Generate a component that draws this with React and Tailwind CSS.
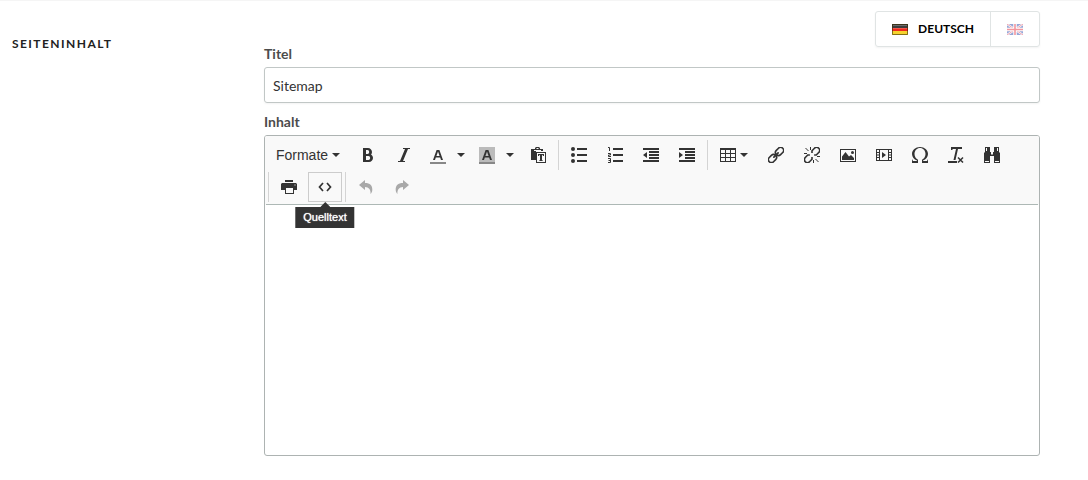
import React, { useState } from 'react';
import clsx from 'clsx';
import { ImOmega } from 'react-icons/im';

const Icon = ({ children }) => (
  <svg viewBox="0 0 16 16" className="w-4 h-4 shrink-0" fill="currentColor" aria-hidden="true">
    {children}
  </svg>
);

const Caret = () => (
  <svg viewBox="0 0 8 4" className="w-2 h-1 shrink-0" fill="currentColor" aria-hidden="true">
    <path d="M0 0h8L4 4z" />
  </svg>
);

const icons = {
  bold: (
    <path
      transform="scale(.015625)"
      d="M707.88 484.652c37.498-44.542 60.12-102.008 60.12-164.652 0-141.16-114.842-256-256-256h-320v896h384c141.158 0 256-114.842 256-256 0-92.956-49.798-174.496-124.12-219.348zM384 192h101.5c55.968 0 101.5 57.42 101.5 128s-45.532 128-101.5 128h-101.5v-256zM543 832h-159v-256h159c58.45 0 106 57.42 106 128s-47.55 128-106 128z"
    />
  ),
  italic: <path d="M14 1v1h-2L7 14h2v1H2v-1h2L9 2H7V1z" />,
  forecolor: (
    <>
      <path d="M3 13 6.600 3h2.800L13 13h-2l-.8-2.500H5.800L5 13zM6.400 9h3.200L8 4.500z" />
      <path d="M0 15h16v2H0z" fill="#888" />
    </>
  ),
  backcolor: (
    <>
      <path d="M0 0h16v15H0z" fill="#bbb" />
      <path d="M3 13 6.600 3h2.800L13 13h-2l-.8-2.500H5.800L5 13zM6.400 9h3.200L8 4.500z" />
      <path d="M0 15h16v2H0z" fill="#888" />
    </>
  ),
  paste: (
    <g transform="translate(1 0)">
      <path d="M0 2h4V1l1-1h3l1 1v1h3v2H5v9H0zM3 3v1h7V3zM5.500 1v1h2V1z" fillRule="evenodd" />
      <path d="M5 5h10v11H5zM6 6v9h8V6z" fillRule="evenodd" />
      <path d="M7 7h6v2h-1l-.4-1h-.6v5l.8.4V14H8.200v-.6L9 13V8h-.6L8 9H7z" />
    </g>
  ),
  bullist: (
    <>
      <circle cx="2" cy="2" r="2" />
      <circle cx="2" cy="8" r="2" />
      <circle cx="2" cy="14" r="2" />
      <path d="M6 1h10v2H6zM6 7h10v2H6zM6 13h10v2H6z" />
    </>
  ),
  numlist: (
    <>
      <path d="M6 1h10v2H6zM6 7h10v2H6zM6 13h10v2H6z" />
      <path
        d="M1 .5h1.500V4M1 6.500h2.500v1.500h-2v1.500H4M1 11.500h2.500v4H1M1.500 13.500h2"
        fill="none"
        stroke="currentColor"
      />
    </>
  ),
  outdent: <path d="M0 1h16v2H0zM6 4h10v2H6zM6 7h10v2H6zM6 10h10v2H6zM0 13h16v2H0zM4 5v6L0 8z" />,
  indent: <path d="M0 1h16v2H0zM6 4h10v2H6zM6 7h10v2H6zM6 10h10v2H6zM0 13h16v2H0zM0 5v6l4-3z" />,
  table: (
    <path
      fillRule="evenodd"
      d="M0 1h16v14H0zM1 3v3h4V3zM6 3v3h4V3zM11 3v3h4V3zM1 7v3h4V7zM6 7v3h4V7zM11 7v3h4V7zM1 11v3h4v-3zM6 11v3h4v-3zM11 11v3h4v-3z"
    />
  ),
  link: (
    <g fill="none" stroke="currentColor" strokeWidth="1.600" transform="rotate(-45 8 8)">
      <rect x="-1.500" y="5" width="9" height="6" rx="3" />
      <rect x="8.500" y="5" width="9" height="6" rx="3" />
      <path d="M5 8h6" strokeWidth="1.800" strokeLinecap="round" />
    </g>
  ),
  unlink: (
    <g fill="none" stroke="currentColor">
      <g strokeWidth="1.600" transform="rotate(-45 8 8)">
        <path d="M6.500 6.500 5 5H1.500a3 3 0 0 0 0 6H5l1.500-1.500" />
        <path d="M9.500 6.500 11 5h3.500a3 3 0 0 1 0 6H11L9.500 9.500" />
      </g>
      <path d="M6.500 0v3M1.500 1l3 3M0 6.500h3M9.500 16v-3M14.500 15l-3-3M16 9.500h-3" />
    </g>
  ),
  image: (
    <>
      <path d="M0 2h16v13H0zM1 3v11h14V3z" fillRule="evenodd" />
      <circle cx="12.500" cy="5.500" r="1.500" />
      <path d="M2 13V9.500L5.500 5 9 9.500l2-1.500 3 3v2z" />
    </>
  ),
  media: (
    <path
      fillRule="evenodd"
      d="M0 2h16v12H0zM1 3v2h2V3zM1 6v1.500h2V6zM1 8.500V10h2V8.500zM1 11v2h2v-2zM13 3v2h2V3zM13 6v1.500h2V6zM13 8.500V10h2V8.500zM13 11v2h2v-2zM4 3v10h8V3zM6 5v6l4-3z"
    />
  ),
  removeformat: (
    <>
      <path d="M3 0h11v2h-4L7.500 13h-2L8 2H5L4 3H3zM0 14h9v2H0z" />
      <path d="m10 10.500 5 5M15 10.500l-5 5" fill="none" stroke="currentColor" strokeWidth="1.500" />
    </>
  ),
  search: (
    <path
      fillRule="evenodd"
      d="M1 0h5v5h1v2h2V5h1V0h5v5l1 1v10h-6V9H6v7H0V6l1-1zM2 1v3h1V1zM13 1v3h1V1zM1 14v1h4v-1zM11 14v1h4v-1zM7 7.500V8h2v-.5z"
    />
  ),
  print: (
    <path fillRule="evenodd" d="M4 1h8v2H4zM1 4h14l1 1v6h-3v4H4v-4H0V5zM5 9v5h7V9zM13.500 5.500v1h1v-1z" />
  ),
  code: <path d="M6 4 2.500 8 6 12M10 4l3.500 4-3.500 4" fill="none" stroke="currentColor" strokeWidth="1.700" />,
  undo: <path d="M7 1v3c5 0 7.500 2.500 7.300 7-.1 1.600-.8 3-1.800 4C13 11 11 8 7 8v3L1 6z" />,
  redo: <path d="M9 1v3c-5 0-7.500 2.500-7.300 7 .1 1.600.8 3 1.800 4C3 11 5 8 9 8v3l6-5z" />,
};

const Group = ({ first, children }) => (
  <div className={clsx('flex gap-[2px]', first ? 'ml-[2px]' : 'ml-[3px] pl-[3px] border-l border-[#d4d4d4]')}>
    {children}
  </div>
);

const ToolButton = ({ icon, label, disabled, active, tooltip }) => (
  <div className="relative">
    <button
      type="button"
      aria-label={label}
      disabled={disabled}
      className={clsx(
        'w-[34px] h-[30px] flex items-center justify-center border hover:border-[#ccc]',
        active ? 'border-[#ccc]' : 'border-transparent',
        disabled && 'opacity-40'
      )}
    >
      <Icon>{icons[icon]}</Icon>
    </button>
    {tooltip && (
      <div
        role="tooltip"
        className="absolute top-full left-1/2 -translate-x-1/2 z-10 flex flex-col items-center"
      >
        <svg viewBox="0 0 10 5" className="w-[10px] h-[5px]" fill="#333">
          <path d="M5 0l5 5H0z" />
        </svg>
        <div className="bg-[#333] text-white text-[11px] leading-[13px] px-2 py-1 [text-shadow:0_0_1px_white]">
          {label}
        </div>
      </div>
    )}
  </div>
);

const ColorButton = ({ icon, label }) => (
  <div className="flex h-[30px]">
    <button type="button" aria-label={label} className="w-[30px] pt-px flex items-center justify-center">
      <svg viewBox="0 0 16 17" className="w-4 h-[17px]" fill="currentColor" aria-hidden="true">
        {icons[icon]}
      </svg>
    </button>
    <button type="button" aria-label={`${label} wählen`} className="w-[17px] pr-px flex items-center justify-center">
      <Caret />
    </button>
  </div>
);

const FlagDe = () => (
  <svg viewBox="0 0 16 11" className="w-4 h-[11px]" aria-hidden="true">
    <path d="M0 0h16v4H0z" fill="#3c3c3c" />
    <path d="M0 4h16v3H0z" fill="#f0281e" />
    <path d="M0 7h16v4H0z" fill="#f6d32d" />
    <path d="M1 1h14v1H1z" fill="#6b6b6b" />
    <path d="M1 4h14v1H1z" fill="#f4574c" />
    <path d="M.5 .5h15v10H.5z" fill="none" stroke="#3b2e05" strokeOpacity=".6" />
  </svg>
);

const FlagGb = () => (
  <svg viewBox="0 0 16 11" className="w-4 h-[11px] opacity-50" aria-hidden="true">
    <path d="M0 0h16v11H0z" fill="#2f4fae" />
    <path d="M0 0l16 11M16 0L0 11" stroke="#fff" strokeWidth="2" />
    <path d="M0 0l16 11M16 0L0 11" stroke="#e2455a" strokeWidth="1" />
    <path d="M8 0v11M0 5.500h16" stroke="#fff" strokeWidth="3.500" />
    <path d="M8 0v11M0 5.500h16" stroke="#e8303f" strokeWidth="1.600" />
  </svg>
);

const Editor = () => {
  const [content, setContent] = useState('');

  return (
    <div className="border border-[#adb3b2] rounded-[3px]">
      {/* Toolbar */}
      <div
        role="toolbar"
        className="bg-[#f9f9f9] rounded-t-[2px] text-[#333] font-['Liberation_Sans',sans-serif]"
      >
        <div className="flex flex-wrap gap-y-[2px] pt-1 pb-[2px]">
          <Group first>
            <button
              type="button"
              className="h-[30px] w-[82px] flex items-center justify-center gap-1 text-sm whitespace-nowrap"
            >
              Formate
              <Caret />
            </button>
            <ToolButton icon="bold" label="Fett" />
            <ToolButton icon="italic" label="Kursiv" />
            <ColorButton icon="forecolor" label="Textfarbe" />
            <ColorButton icon="backcolor" label="Hintergrundfarbe" />
            <ToolButton icon="paste" label="Als Text einfügen" />
          </Group>
          <Group>
            <ToolButton icon="bullist" label="Aufzählung" />
            <ToolButton icon="numlist" label="Nummerierte Liste" />
            <ToolButton icon="outdent" label="Einzug verkleinern" />
            <ToolButton icon="indent" label="Einzug vergrößern" />
          </Group>
          <Group>
            <button
              type="button"
              aria-label="Tabelle"
              className="h-[30px] w-[46px] flex items-center justify-center gap-1"
            >
              <Icon>{icons.table}</Icon>
              <Caret />
            </button>
            <ToolButton icon="link" label="Link einfügen" />
            <ToolButton icon="unlink" label="Link entfernen" />
            <ToolButton icon="image" label="Bild einfügen" />
            <ToolButton icon="media" label="Video einfügen" />
            <button
              type="button"
              aria-label="Sonderzeichen"
              className="w-[34px] h-[30px] flex items-center justify-center"
            >
              <ImOmega className="w-4 h-4" />
            </button>
            <ToolButton icon="removeformat" label="Formatierung entfernen" />
            <ToolButton icon="search" label="Suchen und ersetzen" />
          </Group>
          <Group>
            <ToolButton icon="print" label="Drucken" />
            <ToolButton icon="code" label="Quelltext" active tooltip />
          </Group>
          <Group>
            <ToolButton icon="undo" label="Rückgängig" disabled />
            <ToolButton icon="redo" label="Wiederholen" disabled />
          </Group>
        </div>
        <div className="mx-px border-b border-[#adb8b5]" />
      </div>

      {/* Content */}
      <textarea
        id="inhalt"
        value={content}
        onChange={(e) => setContent(e.target.value)}
        className="block w-full min-h-[250px] p-2 resize-none outline-none"
      />
    </div>
  );
};

const App = () => {
  const [title, setTitle] = useState('Sitemap');

  return (
    <div className="bg-white border-t border-[#f5f5f5] font-[Lato,sans-serif]">
      <section className="grid grid-cols-[252px_1fr] pl-3 pr-12 pt-[10px] pb-6">
        <h2 className="pt-6 text-xs leading-[18px] font-bold tracking-[0.12em] uppercase text-[#222]">
          Seiteninhalt
        </h2>

        <div>
          {/* Language switch */}
          <div className="flex justify-end">
            <div className="flex h-9 border border-[#e0e4e4] rounded-[3px] shadow-xs">
              <button
                type="button"
                className="flex items-center gap-[10px] px-4 text-xs font-bold uppercase text-black"
              >
                <FlagDe />
                Deutsch
              </button>
              <button type="button" aria-label="English" className="px-4 border-l border-[#e0e4e4]">
                <FlagGb />
              </button>
            </div>
          </div>

          <label htmlFor="titel" className="block text-sm leading-[14px] mb-[6px] font-bold text-[#4c4c4c]">
            Titel
          </label>
          <input
            id="titel"
            type="text"
            value={title}
            onChange={(e) => setTitle(e.target.value)}
            className="block w-full h-9 px-2 mb-3 text-sm text-[#333] border border-[#c1c7c6] rounded-[3px] shadow-xs outline-none"
          />

          <label htmlFor="inhalt" className="block text-sm leading-[14px] mb-[6px] font-bold text-[#4c4c4c]">
            Inhalt
          </label>
          <Editor />
        </div>
      </section>
    </div>
  );
};

export default App;
